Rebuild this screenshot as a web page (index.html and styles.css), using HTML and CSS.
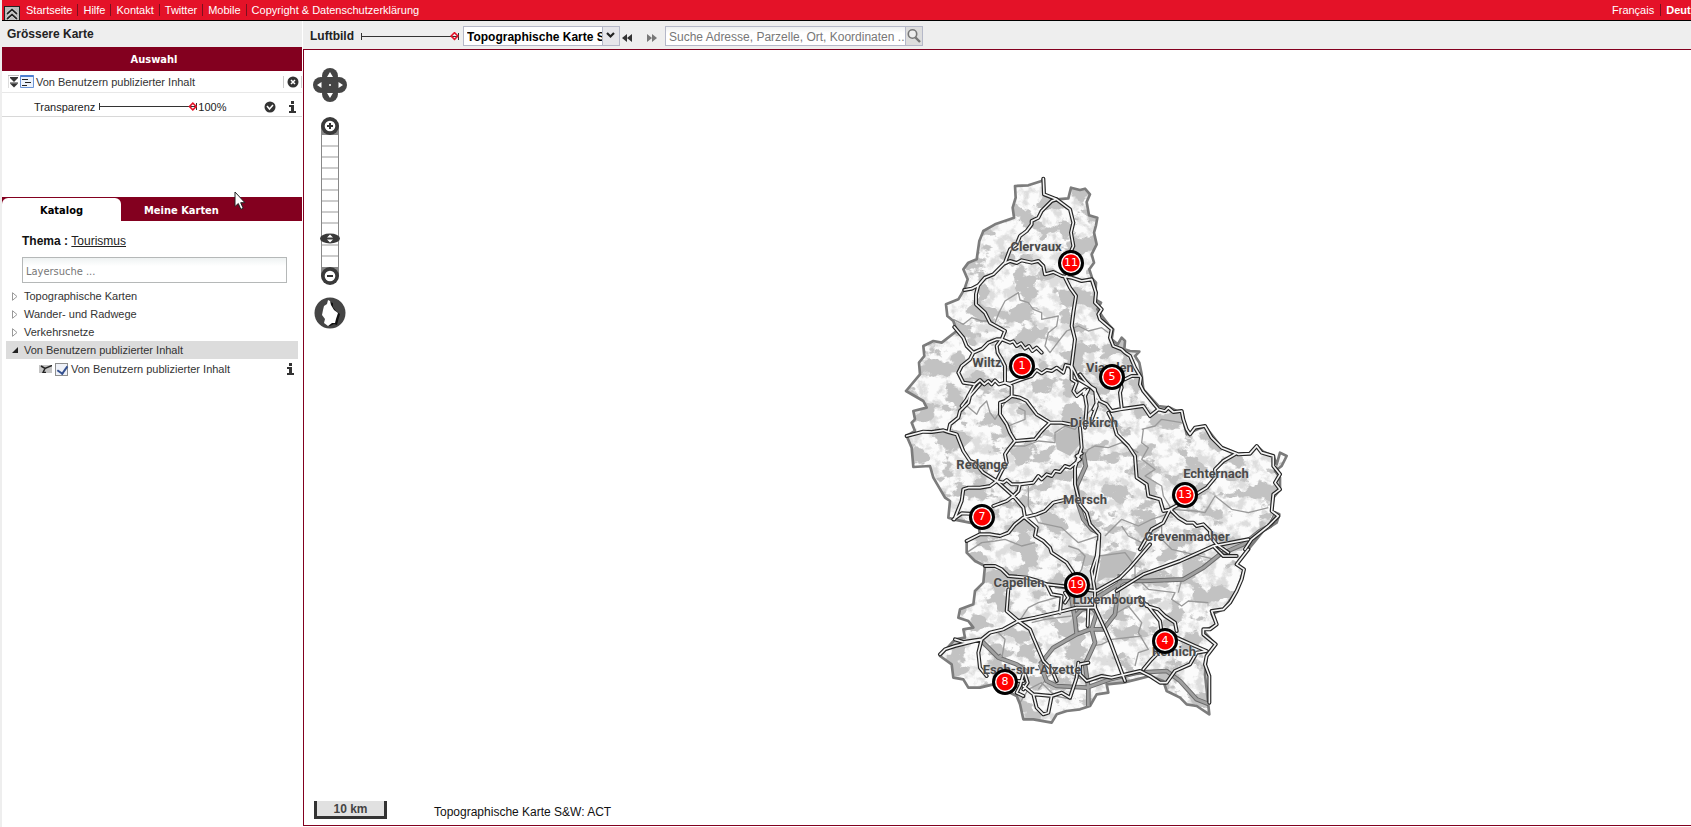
FILE: index.html
```html
<!DOCTYPE html>
<html lang="de">
<head>
<meta charset="utf-8">
<title>Geoportal – Tourismus</title>
<link rel="stylesheet" href="styles.css">
</head>
<body>
<div class="page">
  <header class="topbar">
    <button class="collapse" aria-label="Kopfzeile einklappen">
      <svg width="14" height="14" viewBox="0 0 14 14"><path d="M2 7 7 2.5 12 7M2 12 7 7.5 12 12" fill="none" stroke="#eee" stroke-width="3"/><path d="M2 7 7 2.5 12 7M2 12 7 7.5 12 12" fill="none" stroke="#222" stroke-width="1.700"/></svg>
    </button>
    <nav class="links">
      <a href="#">Startseite</a><a href="#">Hilfe</a><a href="#">Kontakt</a><a href="#">Twitter</a><a href="#">Mobile</a><a href="#">Copyright &amp; Datenschutzerklärung</a>
    </nav>
    <nav class="langs"><a href="#">Français</a><a href="#" class="current">Deutsch</a></nav>
  </header>

  <div class="body">
    <aside class="sidebar">
      <h1 class="side-title">Grössere Karte</h1>
      <h2 class="section-title">Auswahl</h2>
      <div class="layer-row">
        <button class="icon-btn move" aria-label="Ebene verschieben"><svg width="11" height="14" viewBox="0 0 11 14"><path d="M0 13V.5H11" fill="none" stroke="#bbb"/><path d="M2 2.500h8M2 8h8" stroke="#333"/><path d="M2 3h8L6 7zM2 8.500h8L6 12.500z" fill="#333"/></svg></button>
        <svg class="legend" width="14" height="13" viewBox="0 0 14 13"><path d="M.5.5h13v12H.5z" fill="#edf3fc" stroke="#6b94d6"/><path d="M.5 1h13" stroke="#4c7fd0" stroke-width="2"/><path d="M2 4.500h6M5 7.500h6M2 10.500h5" stroke="#222"/></svg>
        <span class="layer-name">Von Benutzern publizierter Inhalt</span>
        <button class="icon-btn close" aria-label="Ebene entfernen"><svg width="12" height="12" viewBox="0 0 12 12"><circle cx="6" cy="6" r="5.500" fill="#333"/><path d="m4 4 4 4m0-4L4 8" stroke="#fff" stroke-width="1.500"/></svg></button>
      </div>
      <div class="layer-row opacity">
        <label for="opacity">Transparenz</label>
        <input class="slider" id="opacity" type="range" min="0" max="100" value="100">
        <output for="opacity">100%</output>
        <button class="icon-btn check" aria-label="Sichtbar"><svg width="12" height="12" viewBox="0 0 12 12"><circle cx="6" cy="6" r="5.500" fill="#333"/><path d="m3 5 2.500 3L9 4" fill="none" stroke="#fff" stroke-width="1.500"/></svg></button>
        <button class="icon-btn info" aria-label="Information"><svg width="7" height="12" viewBox="0 0 7 12"><path d="M2 0h3v3H2zM0 4h5v6h2v2H0v-2h2V6H0z" fill="#333"/></svg></button>
      </div>
      <div class="tabs" role="tablist">
        <button class="tab active" role="tab" aria-selected="true">Katalog</button>
        <button class="tab" role="tab" aria-selected="false">Meine Karten</button>
        <svg class="cursor" width="12" height="20" viewBox="0 0 12 20"><path d="M1 1v14.500l3.300-3 2.500 5.800 2.400-1-2.500-5.600H11z" fill="#fff" stroke="#222"/></svg>
      </div>
      <div class="catalog">
        <p class="theme">Thema : <a href="#">Tourismus</a></p>
        <input class="layer-search" type="text" placeholder="Layersuche ..." aria-label="Layersuche">
        <ul class="tree">
          <li><svg width="6" height="9" viewBox="0 0 6 9"><path d="M.5.7v7.600l4.500-3.800z" fill="#fff" stroke="#999"/></svg>Topographische Karten</li>
          <li><svg width="6" height="9" viewBox="0 0 6 9"><path d="M.5.7v7.600l4.500-3.800z" fill="#fff" stroke="#999"/></svg>Wander- und Radwege</li>
          <li><svg width="6" height="9" viewBox="0 0 6 9"><path d="M.5.7v7.600l4.500-3.800z" fill="#fff" stroke="#999"/></svg>Verkehrsnetze</li>
          <li class="open"><svg width="6" height="6" viewBox="0 0 6 6"><path d="M6 0v6H0z" fill="#222"/></svg>Von Benutzern publizierter Inhalt</li>
          <li class="leaf">
            <svg width="13" height="8" viewBox="0 0 13 8"><path d="M0 0h13v8H0z" fill="#c4c4c4"/><path d="M2 1l4 2.500L13 .5M6 3.500 4 7.500h3" fill="none" stroke="#222" stroke-width="1.500"/></svg>
            <input type="checkbox" id="layer1" checked><label for="layer1">Von Benutzern publizierter Inhalt</label>
            <button class="icon-btn info" aria-label="Information"><svg width="7" height="12" viewBox="0 0 7 12"><path d="M2 0h3v3H2zM0 4h5v6h2v2H0v-2h2V6H0z" fill="#333"/></svg></button>
          </li>
        </ul>
      </div>
    </aside>

    <main class="main">
      <div class="toolbar">
        <label for="aerial">Luftbild</label>
        <input class="slider" id="aerial" type="range" min="0" max="100" value="100">
        <div class="select-box">
          <select aria-label="Hintergrund"><option>Topographische Karte S&amp;W</option></select>
          <svg width="17" height="18" viewBox="0 0 17 18"><path d="M0 0h17v18H0z" fill="#e6e6ea"/><path d="M.5 0v18" stroke="#b5b8c8"/><path d="m5 6 3.500 3.500L12 6" fill="none" stroke="#222" stroke-width="2.200"/></svg>
        </div>
        <button class="icon-btn step" aria-label="Zurück"><svg width="10" height="8" viewBox="0 0 10 8"><path d="M5 0v8L0 4zM10 0v8L5 4z" fill="#333"/></svg></button>
        <button class="icon-btn step next" aria-label="Vor"><svg width="10" height="8" viewBox="0 0 10 8"><path d="M0 0v8l5-4zM5 0v8l5-4z" fill="#777"/></svg></button>
        <div class="search">
          <input type="text" placeholder="Suche Adresse, Parzelle, Ort, Koordinaten ..." aria-label="Suche">
          <button aria-label="Suchen"><svg width="16" height="16" viewBox="0 0 16 16"><circle cx="6.500" cy="6" r="4.200" fill="#eee" stroke="#777" stroke-width="1.600"/><path d="m9.500 9.500 4.500 4.500" stroke="#777" stroke-width="2.400"/></svg></button>
        </div>
      </div>

      <div class="map">
        <div class="controls">
          <svg width="36" height="36" viewBox="0 0 36 36"><g fill="#454545"><circle cx="18" cy="9" r="8"/><circle cx="18" cy="27" r="8"/><circle cx="9" cy="18" r="8"/><circle cx="27" cy="18" r="8"/><path d="M10 10h16v16H10z"/></g><g fill="#fff"><path d="m18 5 3 5h-6zM18 31l3-5h-6zM5 18l4.500-3v6zM31 18l-4.500-3v6z"/><circle cx="18" cy="18" r="1"/></g></svg>
          <svg class="zoom" width="20" height="168" viewBox="0 0 20 168">
            <path d="M1.500 9v150h17V9z" fill="#fff" stroke="#888"/>
            <path d="M2 9h16v9H2zM2 150h16v9H2z" fill="#888"/>
            <path d="M2 29h16M2 40h16M2 51h16M2 62h16M2 73h16M2 84h16M2 95h16M2 106h16M2 128h16M2 139h16" stroke="#ccc" stroke-width="2"/>
            <circle cx="10" cy="9" r="9" fill="#3a3a3a"/><circle cx="10" cy="9" r="5.300" fill="#fff"/><path d="M10 6v6M7 9h6" stroke="#333" stroke-width="2"/>
            <ellipse cx="10" cy="121.500" rx="10" ry="5" fill="#3a3a3a"/><path d="m10 117.500 3 3H7zM10 125.500l3-3H7z" fill="#fff"/>
            <circle cx="10" cy="159" r="9" fill="#3a3a3a"/><circle cx="10" cy="159" r="5.300" fill="#fff"/><path d="M7 159h6" stroke="#333" stroke-width="2"/>
          </svg>
          <svg width="32" height="32" viewBox="0 0 32 32"><circle cx="16" cy="16" r="15.500" fill="#454545"/><path d="m16 5 3 1 0 4 3 4 4 3-2 7-1 4-3-1-4 2-4-2 1-4z" fill="#111"/><path d="m14 3 2 1 1 4 3 5 4 3-2 6-1 4-3 0-4 3-4-3 1-4-3-4 1-5 1-4 3-2z" fill="#fff"/></svg>
        </div>

        <div class="country">
          <svg class="terrain" viewBox="0 0 1230 1710" aria-hidden="true">
            <defs>
              <path id="border" d="M445 38 447 85 485 100 520 97 528 65 555 72 570 68 585 85 575 108 582 148 607 155 603 178 597 200 605 235 590 265 597 290 583 310 592 338 603 350 600 400 618 410 607 430 625 455 640 475 655 490 650 520 668 535 680 515 690 525 688 550 705 555 733 557 720 570 733 590 740 625 745 670 790 720 825 725 845 735 860 735 875 805 895 795 930 780 980 845 1030 865 1065 863 1085 840 1105 857 1135 870 1145 895 1155 860 1175 870 1160 900 1140 915 1155 935 1155 970 1135 995 1130 1035 1153 1045 1145 1070 1105 1095 1060 1150 1025 1195 1047 1210 1025 1275 985 1330 950 1345 965 1375 925 1395 962 1435 935 1470 930 1525 943 1645 905 1620 875 1615 855 1595 815 1575 805 1545 765 1530 725 1540 685 1550 635 1555 640 1580 605 1585 585 1620 555 1630 515 1635 485 1645 470 1670 415 1660 385 1660 375 1615 365 1590 335 1575 295 1555 255 1565 220 1565 205 1540 175 1535 170 1495 135 1470 180 1420 210 1415 205 1390 235 1385 220 1365 190 1355 195 1330 235 1315 240 1275 265 1250 270 1200 240 1185 215 1160 215 1125 255 1105 250 1075 175 1060 160 1055 165 1005 150 995 115 935 105 900 55 903 50 845 35 810 60 795 50 770 60 760 55 735 95 725 85 705 33 675 75 625 72 590 88 570 85 540 115 525 140 530 185 495 175 465 157 450 153 415 190 400 208 370 218 340 205 310 220 290 245 280 253 225 265 195 300 175 357 155 353 125 362 95 360 60 400 58 440 45z"/>
              <clipPath id="land"><use href="#border"/></clipPath>
              <filter id="forest" x="0" y="0" width="1" height="1" color-interpolation-filters="sRGB">
                <feTurbulence type="fractalNoise" baseFrequency="0.014 0.019" numOctaves="6" seed="8"/>
                <feColorMatrix values="0 0 0 0 .76  0 0 0 0 .76  0 0 0 0 .76  16 4 0 0 -10.500"/>
              </filter>
              <filter id="relief" x="0" y="0" width="1" height="1" color-interpolation-filters="sRGB">
                <feTurbulence type="fractalNoise" baseFrequency="0.03" numOctaves="5" seed="21"/>
                <feColorMatrix values="0 0 0 0 .75  0 0 0 0 .75  0 0 0 0 .75  0 5 0 0 -2.300"/>
              </filter>
              <path id="roads" d="M445 38 447 85 485 100 525 130 535 170 528 200 535 240 525 262 525 320 510 335 525 365 543 390 535 440 530 480 540 520 530 600 550 640 600 670 605 720 590 760M485 100 470 105 440 135 430 155 410 165 410 175 395 195 375 210 365 235 345 250 330 290 295 325 270 335 250 358 230 368 208 372M330 292 345 285 365 291 380 283 410 290 430 285 445 300 450 325 475 318 500 330 530 335 560 345 590 340 603 380 600 410 620 430 610 445 615 460 650 490 645 515 655 540 680 550 690 560 705 570 720 605 738 635 735 655 745 675 790 730M250 358 243 385 243 415 270 440 285 470 330 495 320 520 345 530 355 526 365 540 378 532 390 548 402 540 412 555 425 545 440 560M178 483 205 515 215 540 235 560 225 580 200 600 190 620 195 630 205 650 240 655 255 642 268 655 280 645 290 655 300 643 312 655 330 650 345 653 380 640 410 630 425 612 440 622 455 612 470 615 485 605 505 620 512 597 525 600 530 610M235 560 262 548 280 530 305 520 320 520 305 540 308 560 320 580 330 600 330 650 350 660 350 690M240 655 220 690 215 700 200 720M255 655 225 690 220 710 195 735 190 755 165 775 160 798 145 793 110 798 85 797 35 810M160 798 185 805 205 855 225 885 240 890 265 920 305 945M350 690 330 705 315 710 315 745 335 775 345 800 360 825 340 850 330 865 335 890 320 915 305 945M350 690 375 695 395 705 425 745 465 770 500 770 525 775M360 825 395 822 420 820 440 795 465 770M305 945 355 990 385 1025 390 1055 425 1085 420 1110 445 1125 465 1145 470 1160 515 1190 535 1220M305 945 325 950 335 942 350 955 375 955 415 950 430 930 440 940 455 925 470 930 480 915 495 918 510 900 525 905 555 880 545 870 560 862M305 945 285 960 255 965 220 965 205 970 200 1005 190 1030 178 1060M375 955 370 975 355 990 335 1005 295 1020 M255 1045 200 1042 175 1060M215 1125 255 1105 285 1105 315 1110 340 1100 360 1075 385 1055 425 1045 450 1035 475 1010 515 1000M555 785 560 845 540 905 540 955 555 1015 575 1040 585 1075 613 1105 610 1165 595 1245M530 600 530 640 545 650 535 675 545 690 570 670 565 685 580 670 570 690 575 720 570 785M555 625 575 650 600 675 615 705 635 715 650 735 675 730 745 720 765 750 790 730 810 735 820 725 835 738 860 735 865 760 875 790 885 805 900 785 930 780 950 815 980 845 1030 865 1065 863 1085 840 1100 860 1135 870 1135 900 1155 925 1140 950 1155 970 1135 985 1130 1035 1150 1050 1120 1080 1070 1120 1050 1150M675 640 680 665 675 680 680 725M690 640 710 630 735 630M600 675 610 700 595 730M640 740 655 770 665 805 700 840 720 870 725 935 755 955 760 990 795 1000 805 1035 830 1030M1020 865 985 885 960 910 960 935 935 965 870 1005 825 1030 805 1070 770 1090 735 1150M830 1035 850 1055 875 1070 895 1070 905 1080 925 1075 945 1095 945 1110 965 1135 1000 1160M610 1125 605 1170 590 1215 600 1275M765 1135 735 1170 705 1205 675 1235 605 1275M1060 1120 955 1140 900 1165 855 1185 745 1225 665 1275M955 1140 985 1170 1025 1170M270 1200 300 1200 320 1210 340 1230 395 1235 430 1245 455 1255 500 1260 535 1265 600 1275M340 1270 335 1335 370 1365 405 1390 415 1415 430 1450 445 1485 470 1510 485 1545M135 1465 150 1450 180 1440 260 1420 285 1400 325 1390 370 1365 420 1355 485 1340 545 1325 600 1325M180 1420 205 1428 260 1420 250 1460 255 1505 275 1530M600 1275 600 1325 630 1390 645 1425 660 1465 690 1545M455 1255 470 1285 500 1290 495 1340M510 1310 520 1295 510 1280M755 1315 795 1365 800 1400 835 1405 845 1415 900 1440 935 1455M735 1295 755 1320 790 1330 810 1350 840 1370 845 1395M935 1455 905 1460 885 1495 840 1515 815 1550 795 1550 765 1530 735 1515 650 1535 620 1530 575 1545 555 1525 555 1495 580 1490M745 1510 770 1480 790 1460M1060 1150 1025 1195 1047 1210 1040 1240 1025 1275 1005 1310 985 1330 950 1335 965 1375 945 1390 925 1390 925 1405 962 1435 935 1470 930 1495 943 1530 943 1610M385 1525 375 1560 365 1580 385 1590M385 1560 415 1585 425 1625 445 1645 460 1640 470 1590 415 1585M470 1590 500 1580 525 1595 545 1535 550 1490M580 1325 578 1380M390 1525 398 1550 385 1570M360 1560 350 1545 385 1545"/>
              <path id="motorways" d="M565 860 572 900 545 960 550 1015 565 1060 590 1090 610 1100M1145 1040 1125 1080 1095 1095 1045 1135 975 1165 925 1205 865 1240 745 1245 685 1245 605 1295M260 1425 310 1475 365 1495 400 1520M310 1475 320 1468M435 1495 475 1445 545 1405 585 1390 625 1390 660 1345 675 1225M545 1405 540 1360 530 1300 535 1265 480 1260M540 1350 560 1330 590 1325 605 1340 590 1390 600 1430 570 1495 580 1565 580 1620M435 1495 455 1545 485 1560 575 1565 645 1540 725 1520 815 1515 855 1545 905 1600 943 1615"/>
              <path id="districts" d="M300 470 312 440 330 405 370 380 375 402 400 410 415 430 440 440 440 460 490 450 485 480 460 500 450 540 465 560 495 520 515 495 550 480 580 495 620 485 640 500M175 460 205 475 230 455 260 465 290 465 310 490M210 715 245 745 255 725 275 705 285 740 300 760 330 710M370 725 390 735 390 760 340 780M350 840 390 840 430 825 480 830 480 800 510 780 540 790 570 750 600 720M555 890 580 850 600 840 640 845 680 830 730 860M740 790 780 780 800 760 860 770M745 790 740 830 760 845 740 880 780 910 750 930 800 960 805 990 830 1030 900 1035 930 1040 960 990 1010 1030 1060 1040 1120 1025M400 960 400 1020 430 1070 500 1085 550 1130 610 1110M215 1160 260 1130 300 1125 330 1120 380 1140 420 1130M630 1110 650 1090 680 1060 730 1080 770 1060 830 1040M680 1080 700 1110 740 1130 760 1100 800 1080 800 1120 830 1150 960 1180M520 1140 550 1150 570 1170 560 1210 540 1240M610 1170 690 1160 720 1200 720 1230 760 1270 840 1280 830 1300 860 1320 880 1305 940 1310M370 1370 400 1325 430 1310 500 1290M410 1370 450 1360 530 1350M620 1390 650 1350 700 1320 740 1370 730 1400 760 1450 730 1460 720 1500M310 1400 330 1420 320 1480 390 1500M590 1440 620 1435 650 1420 740 1410M375 1610 400 1570 440 1550 480 1590 530 1600M860 1240 850 1280M430 1570 460 1530 500 1510 560 1540"/>
            </defs>
            <use href="#border" fill="#fbfbfb"/>
            <g clip-path="url(#land)">
              <rect width="1230" height="1710" filter="url(#relief)" opacity=".5"/>
              <rect width="1230" height="1710" filter="url(#forest)"/>
              <path fill="#bdbdbd" d="M620 1170 650 1158 690 1150 725 1160 710 1190 690 1210 660 1235 630 1235 605 1250 612 1210zM480 805l30-20 40 10 5 40-30 35-40-20z"/>
            </g>
            <g fill="none" stroke-linejoin="round">
              <use href="#districts" stroke="#999" stroke-width="4"/>
              <use href="#border" stroke="#7c7c7c" stroke-width="8"/>
              <use href="#motorways" stroke="#6c6c6c" stroke-width="14"/>
              <use href="#motorways" stroke="#a0a0a0" stroke-width="8"/>
              <use href="#roads" stroke="#262626" stroke-width="12" stroke-linecap="round"/>
              <use href="#roads" stroke="#f4f4f4" stroke-width="5" stroke-linecap="round"/>
            </g>
          </svg>
          <span class="place" style="left:141px;top:81px">Clervaux</span>
          <span class="place" style="left:92px;top:197px">Wiltz</span>
          <span class="place" style="left:215px;top:202px">Vianden</span>
          <span class="place" style="left:199px;top:257px">Diekirch</span>
          <span class="place" style="left:87px;top:299px">Redange</span>
          <span class="place" style="left:190px;top:334px">Mersch</span>
          <span class="place" style="left:321px;top:308px">Echternach</span>
          <span class="place" style="left:292px;top:371px">Grevenmacher</span>
          <span class="place" style="left:124px;top:417px">Capellen</span>
          <span class="place" style="left:214px;top:434px">Luxembourg</span>
          <span class="place" style="left:279px;top:486px">Remich</span>
          <span class="place" style="left:137px;top:504px">Esch-sur-Alzette</span>
          <button class="pin" style="left:176px;top:97px">11</button>
          <button class="pin" style="left:127px;top:200px">1</button>
          <button class="pin" style="left:217px;top:211px">5</button>
          <button class="pin" style="left:290px;top:329px">13</button>
          <button class="pin" style="left:87px;top:351px">7</button>
          <button class="pin" style="left:182px;top:419px">19</button>
          <button class="pin" style="left:270px;top:475px">4</button>
          <button class="pin" style="left:110px;top:516px">8</button>
        </div>

        <div class="map-footer">
          <span class="scale">10 km</span>
          <span class="credit">Topographische Karte S&amp;W: ACT</span>
        </div>
      </div>
    </main>
  </div>
</div>
</body>
</html>
```
FILE: styles.css
```css
* { box-sizing: border-box; }
body { margin: 0; font: 11px/14px "Liberation Sans", Arial, sans-serif; color: #333; background: #fff; }
button, input, select { font: inherit; color: inherit; margin: 0; padding: 0; border: 0; background: none; border-radius: 0; }
svg { display: block; flex: none; }
h1, h2, p, ul { margin: 0; padding: 0; }
a { color: inherit; text-decoration: none; }

.page { display: flex; flex-direction: column; height: 100vh; overflow: hidden; border-left: 2px solid #eee; background: #fff; }

.topbar { display: flex; align-items: center; flex: none; height: 21px; background: #e41228; border-bottom: 1px solid #000; color: #fff; overflow: hidden; }
.collapse { align-self: flex-end; width: 16px; height: 14px; margin-left: 2px; background: #bbb; border: 1px solid #222; border-bottom: 0; overflow: hidden; }
.links, .langs { display: flex; white-space: nowrap; }
.links { margin-left: 6px; }
.links a + a { margin-left: 5px; padding-left: 5px; border-left: 1px solid #7c1020; }
.langs a + a { margin-left: 6px; padding-left: 5px; border-left: 1px solid #7c1020; }
.langs { width: 79px; margin-left: auto; overflow: hidden; }
.langs .current { font-weight: bold; }
.topbar a { line-height: 12px; }

.body { display: flex; flex: 1; min-height: 0; }
.sidebar { flex: none; width: 301px; padding-right: 1px; }
.side-title { height: 26px; padding-left: 5px; background: #eee; font-size: 12px; line-height: 26px; color: #222; }
.section-title { height: 24px; padding-left: 4px; background: #83001f; color: #fff; text-align: center; font: bold 11px/26px "DejaVu Sans Condensed", "DejaVu Sans", sans-serif; }
.layer-row { display: flex; align-items: center; height: 22px; padding-left: 5px; border-bottom: 1px solid #e8e8e8; white-space: nowrap; }
.icon-btn { display: flex; align-items: center; justify-content: center; flex: none; cursor: pointer; }
.move { width: 13px; }
.layer-name { margin-left: 2px; }
.close { width: 19px; height: 12px; margin-left: auto; border-left: 1px solid #ccc; border-right: 1px solid #ccc; }
.opacity { height: 24px; padding: 4px 6px 0 32px; border-color: #d8d8d8; color: #222; }
.opacity output { margin-left: 1px; }
.opacity .slider { margin-left: 4px; }
.opacity .check { margin-left: auto; }
.opacity .info { margin-left: 13px; }

.slider { appearance: none; flex: none; width: 98px; height: 9px; background: linear-gradient(#333, #333) left / 1px 7px no-repeat, linear-gradient(#333, #333) right / 1px 7px no-repeat, linear-gradient(#333, #333) center / 100% 1px no-repeat; }
.slider::-webkit-slider-thumb { appearance: none; width: 9px; height: 9px; background: #e41228; clip-path: polygon(evenodd, 50% 0, 100% 50%, 50% 100%, 0 50%, 50% 0, 50% 25%, 75% 50%, 50% 75%, 25% 50%, 50% 25%); }

.tabs { position: relative; display: flex; height: 24px; margin-top: 80px; padding-top: 1px; background: #83001f; }
.tab { padding: 0 23px; color: #fff; font: bold 11px/25px "DejaVu Sans Condensed", "DejaVu Sans", sans-serif; }
.tab.active { width: 119px; background: #fff; color: #000; border-radius: 6px 6px 0 0; }
.cursor { position: absolute; left: 232px; top: -6px; }

.catalog { padding: 12px 4px 0; }
.theme { padding-left: 16px; font-size: 12px; line-height: 16px; font-weight: bold; color: #111; }
.theme a { font-weight: normal; text-decoration: underline; color: #222; }
.layer-search { display: block; width: 265px; height: 26px; margin: 8px 0 4px 16px; padding: 2px 3px 0; border: 1px solid #b5b8b8; background: linear-gradient(#eef2f2, #fff 8px); font: 11px/16px "DejaVu Sans Condensed", "DejaVu Sans", sans-serif; }
input::placeholder { color: #777; opacity: 1; }
.tree { list-style: none; }
.tree li { display: flex; align-items: center; gap: 6px; height: 18px; padding-left: 6px; white-space: nowrap; }
.tree .open { background: #dcdcdc; }
.tree .leaf { gap: 3px; height: 20px; padding: 0 4px 0 33px; }
.leaf input { appearance: none; flex: none; width: 13px; height: 13px; border: 1px solid #8e8f8f; background: #eef1f8; }
.leaf input:checked::after { content: ""; display: block; width: 5px; height: 8px; margin-left: 3px; border: solid #34508f; border-width: 0 2px 2px 0; transform: rotate(35deg); }
.leaf .info { margin-left: auto; }

.main { display: flex; flex-direction: column; flex: 1; min-width: 0; }
.toolbar { display: flex; align-items: center; flex: none; height: 28px; padding: 2px 0 0 7px; background: #eee; white-space: nowrap; }
.toolbar label { width: 51px; font-size: 12px; font-weight: bold; color: #222; }
.select-box { display: flex; width: 157px; height: 20px; margin-left: 4px; border: 1px solid #b5b8c8; background: #fff; }
.select-box select { appearance: none; flex: 1; min-width: 0; padding: 2px 0 0 3px; font-size: 12px; font-weight: bold; color: #000; text-overflow: clip; }
.step { width: 14px; height: 20px; padding-top: 4px; }
.step.next { margin-left: 11px; }
.search { display: flex; width: 258px; height: 20px; margin-left: 6px; border: 1px solid #b5b8c8; }
.search input { flex: 1; min-width: 0; padding: 2px 0 0 3px; font-size: 12px; background: linear-gradient(#eef0f0, #fff 6px); }
.search button { display: flex; align-items: center; width: 17px; border-left: 1px solid #b5b8c8; background: #ddd; }

.map { position: relative; flex: 1; min-height: 0; margin-bottom: 1px; border: solid #83001f; border-width: 1px 0 1px 1px; background: #fff; overflow: hidden; }
.controls { position: absolute; left: 8px; top: 17px; display: flex; flex-direction: column; align-items: center; }
.zoom { margin: 14px 0 12px; }
.country { position: absolute; left: 591px; top: 116px; width: 410px; height: 570px; }
.terrain { width: 100%; height: 100%; }
.place { position: absolute; transform: translate(-50%, -50%); font: bold 13px/18px Roboto, "Liberation Sans", sans-serif; color: #4a4a4a; text-shadow: 0 0 2px #ddd; white-space: nowrap; }
.pin { position: absolute; width: 26px; height: 26px; transform: translate(-50%, -50%); border: 3px solid #000; border-radius: 50%; background: radial-gradient(circle, #f00 8px, #fff 9px); color: #fff; text-align: center; font: 11px/20px "DejaVu Sans", sans-serif; }
.map-footer { position: absolute; left: 10px; bottom: 6px; display: flex; align-items: flex-end; gap: 47px; font-size: 12px; color: #111; }
.scale { width: 73px; height: 18px; border: solid #333; border-width: 0 3px 3px; background: #e1e1e1; text-align: center; line-height: 16px; font-weight: bold; color: #444; }
```
